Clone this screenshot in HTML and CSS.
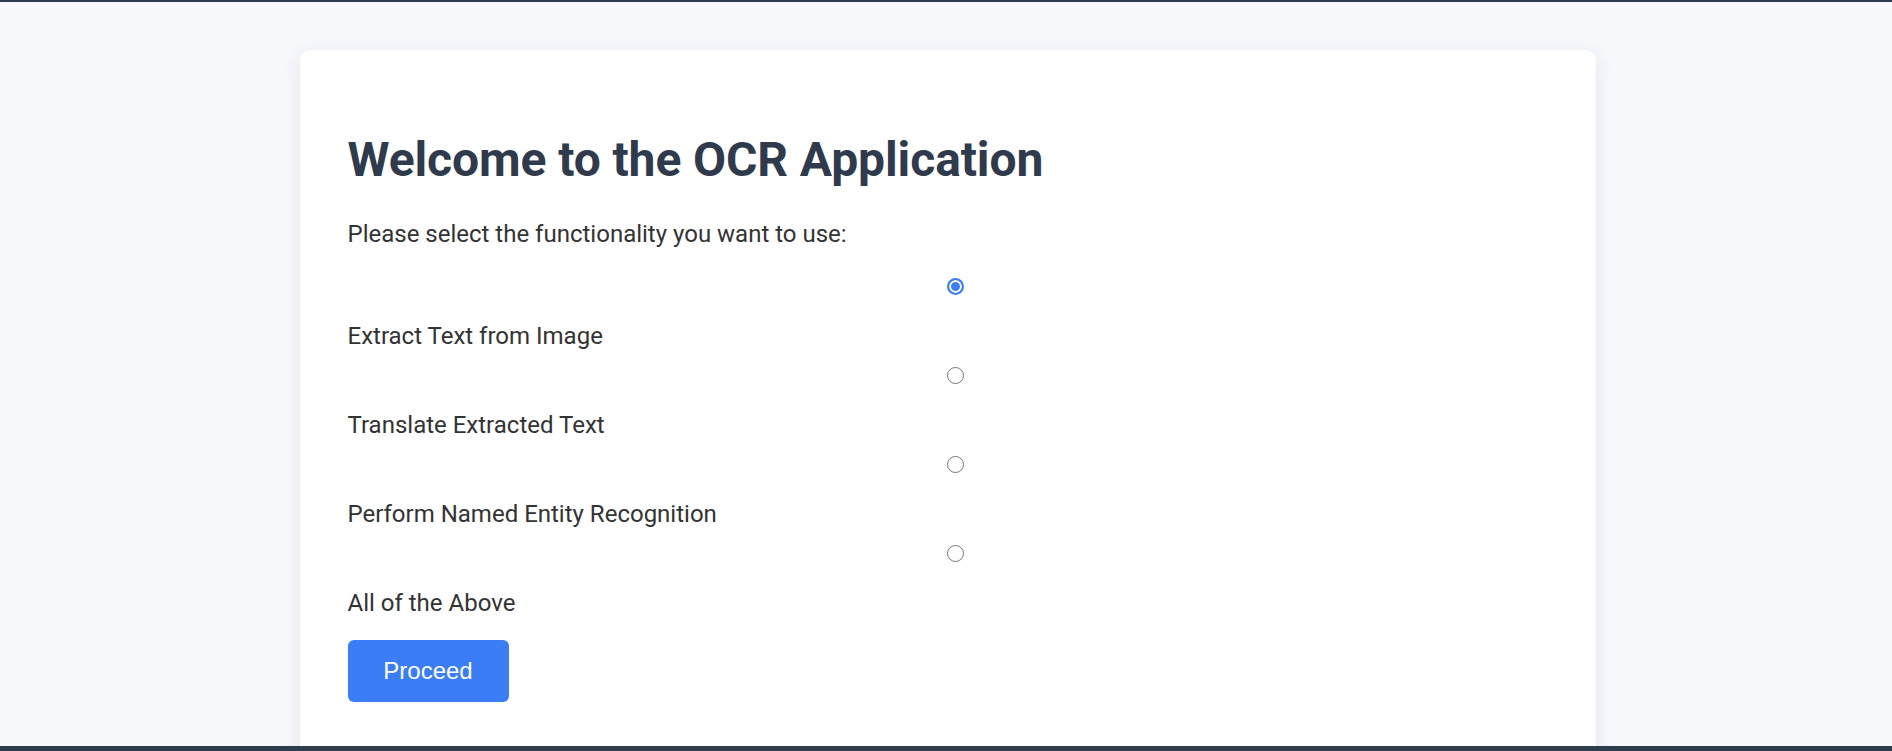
FILE: index.html
```html
<!DOCTYPE html>
<html lang="en">
<head>
<meta charset="utf-8">
<title>OCR Application</title>
<link rel="stylesheet" href="styles.css">
</head>
<body>
<div class="topbar"></div>
<main class="page">
  <section class="card">
    <h1 class="title">Welcome to the OCR Application</h1>
    <p class="intro">Please select the functionality you want to use:</p>
    <form class="options">
      <div class="option">
        <input class="radio" type="radio" name="func" id="o1" checked>
        <label class="option-label" for="o1">Extract Text from Image</label>
      </div>
      <div class="option">
        <input class="radio" type="radio" name="func" id="o2">
        <label class="option-label" for="o2">Translate Extracted Text</label>
      </div>
      <div class="option">
        <input class="radio" type="radio" name="func" id="o3">
        <label class="option-label" for="o3">Perform Named Entity Recognition</label>
      </div>
      <div class="option">
        <input class="radio" type="radio" name="func" id="o4">
        <label class="option-label" for="o4">All of the Above</label>
      </div>
      <button class="btn" type="button">Proceed</button>
    </form>
  </section>
</main>
<div class="bottombar"></div>
</body>
</html>
```

FILE: styles.css
```css
html, body {
  margin: 0;
  padding: 0;
}
body {
  background: #f7f8fc;
  font-family: Roboto, "Liberation Sans", sans-serif;
  color: #333333;
  overflow: hidden;
}
.topbar {
  height: 2px;
  background: #313d4d;
}
.page {
  display: flex;
  justify-content: center;
  padding: 48px 0 0 3px;
}
.card {
  width: 1200px;
  background: #ffffff;
  border-radius: 10px;
  box-shadow: 0 4px 20px rgba(30, 40, 80, 0.09);
  padding: 82px 48px 120px;
}
.title {
  margin: 0;
  font-size: 48px;
  line-height: 56px;
  font-weight: 700;
  color: #2f3b4c;
  letter-spacing: -0.1px;
}
.intro {
  margin: 32px 0 0;
  font-size: 24px;
  line-height: 28px;
}
.options {
  display: flex;
  flex-direction: column;
  align-items: flex-start;
  margin-top: 30px;
}
.option {
  display: flex;
  flex-direction: column;
  align-self: stretch;
  margin-bottom: 17px;
}
.radio {
  appearance: none;
  -webkit-appearance: none;
  box-sizing: border-box;
  width: 17px;
  height: 17px;
  margin: 0 0 27px 599px;
  border: 1.5px solid #767676;
  border-radius: 50%;
  background: #fff;
}
.radio:checked {
  border: 2px solid #3b7ef6;
  box-shadow: inset 0 0 0 2px #fff;
  background: #3b7ef6;
}
.option-label {
  font-size: 24px;
  line-height: 28px;
  color: #333;
}
.btn {
  margin-top: 6px;
  width: 161px;
  height: 62px;
  border: none;
  border-radius: 6px;
  background: #3b7df6;
  color: #fff;
  font-family: "Liberation Sans", Arial, sans-serif;
  font-size: 24px;
  padding: 0;
}
.bottombar {
  position: fixed;
  left: 0;
  right: 0;
  bottom: 0;
  height: 5px;
  background: #313d4d;
}
```
